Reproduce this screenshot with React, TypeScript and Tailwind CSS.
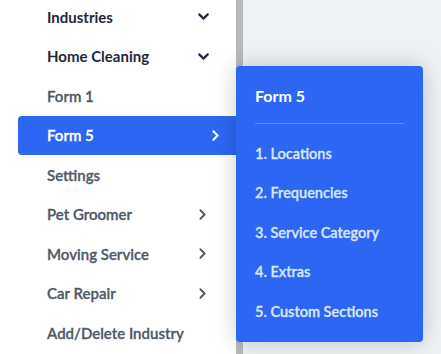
import { ChevronDown, ChevronRight } from "lucide-react";

type Item = {
  label: string;
  icon?: "down" | "right";
  strong?: boolean;
  active?: boolean;
};

const items: Item[] = [
  { label: "Industries", icon: "down", strong: true },
  { label: "Home Cleaning", icon: "down", strong: true },
  { label: "Form 1" },
  { label: "Form 5", icon: "right", active: true },
  { label: "Settings" },
  { label: "Pet Groomer", icon: "right" },
  { label: "Moving Service", icon: "right" },
  { label: "Car Repair", icon: "right" },
  { label: "Add/Delete Industry" },
];

const steps = [
  "1. Locations",
  "2. Frequencies",
  "3. Service Category",
  "4. Extras",
  "5. Custom Sections",
];

function SideItem({ item }: { item: Item }) {
  if (item.active) {
    return (
      <div className="ml-[18px] flex h-[39.5px] items-center rounded-l-[4px] bg-[#2d66f2] pl-[29px] pr-[12px] text-[15px] font-semibold text-white [-webkit-text-stroke:0.3px_white]">
        <span className="flex-1">{item.label}</span>
        <ChevronRight size={17} strokeWidth={3} />
      </div>
    );
  }
  return (
    <div
      className={
        "flex h-[39.5px] items-center pl-[47px] text-[15px] " +
        (item.strong
          ? "font-bold text-[#1d293a]"
          : "font-semibold text-[#4f5967] [-webkit-text-stroke:0.3px_#4f5967]")
      }
    >
      <span className="flex-1">{item.label}</span>
      {item.icon === "down" && (
        <ChevronDown size={17} strokeWidth={3} className="mr-[24px]" />
      )}
      {item.icon === "right" && (
        <ChevronRight size={17} strokeWidth={2.6} className="mr-[25px]" />
      )}
    </div>
  );
}

export default function App() {
  return (
    <div
      className="relative flex h-[354px] w-[441px] overflow-hidden bg-[#eef1f5]"
      style={{ fontFamily: "Lato, 'Open Sans', sans-serif" }}
    >
      <div className="w-[236px] bg-white">
        <div className="mt-[-3px]">
          {items.map((it) => (
            <SideItem key={it.label} item={it} />
          ))}
        </div>
      </div>
      <div className="w-[7px] bg-[#b9b9b9]" />
      <div className="flex-1" />

      {/* flyout menu */}
      <div className="absolute left-[236px] top-[66px] w-[187px] rounded-[4px] bg-[#2d66f2] px-[19px] pb-[10px] shadow-[0_0_22px_rgba(15,23,42,0.22)]">
        <div className="pt-[20px] text-[16px] font-bold leading-[20px] text-white">
          Form 5
        </div>
        <div className="mt-[17px] h-px bg-[#5f88f5]" />
        <div className="mt-[10px]">
          {steps.map((s) => (
            <div
              key={s}
              className="flex h-[39.5px] items-center text-[14.5px] font-semibold text-[#d9e4fd] [-webkit-text-stroke:0.3px_#d9e4fd]"
            >
              {s}
            </div>
          ))}
        </div>
      </div>
    </div>
  );
}
